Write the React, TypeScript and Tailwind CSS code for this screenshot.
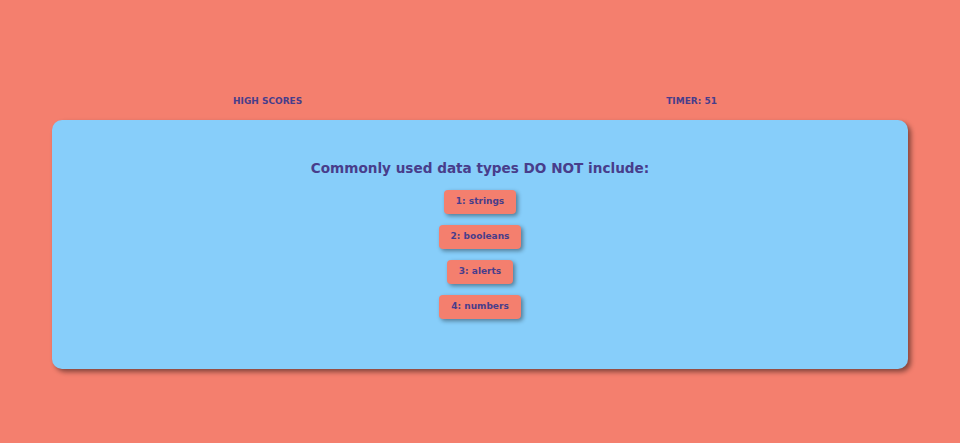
const answers = ["1: strings", "2: booleans", "3: alerts", "4: numbers"];

export default function App() {
  return (
    <div
      className="min-h-screen bg-[#f47f6e] text-[#483d8b] pt-[95px]"
      style={{ fontFamily: '"DejaVu Sans", sans-serif' }}
    >
      <header className="flex justify-between pl-[233px] pr-[243px] text-[9px] font-bold leading-[12px]">
        <span>HIGH SCORES</span>
        <span>TIMER: 51</span>
      </header>
      <main className="mx-[52px] mt-[13px] h-[249px] rounded-[10px] bg-[#87cefa] shadow-[3px_3px_5px_rgba(0,0,0,0.45)] flex flex-col items-center pt-[38px]">
        <h1 className="text-[13.6px] font-bold leading-[20px]">Commonly used data types DO NOT include:</h1>
        <div className="mt-[12px] flex flex-col items-center gap-[11px]">
          {answers.map((a) => (
            <button
              key={a}
              className="h-[24px] px-[12px] rounded-[4px] bg-[#f47f6e] text-[9px] font-bold text-[#483d8b] shadow-[2px_2px_4px_rgba(0,0,0,0.4)]"
            >
              {a}
            </button>
          ))}
        </div>
      </main>
    </div>
  );
}
